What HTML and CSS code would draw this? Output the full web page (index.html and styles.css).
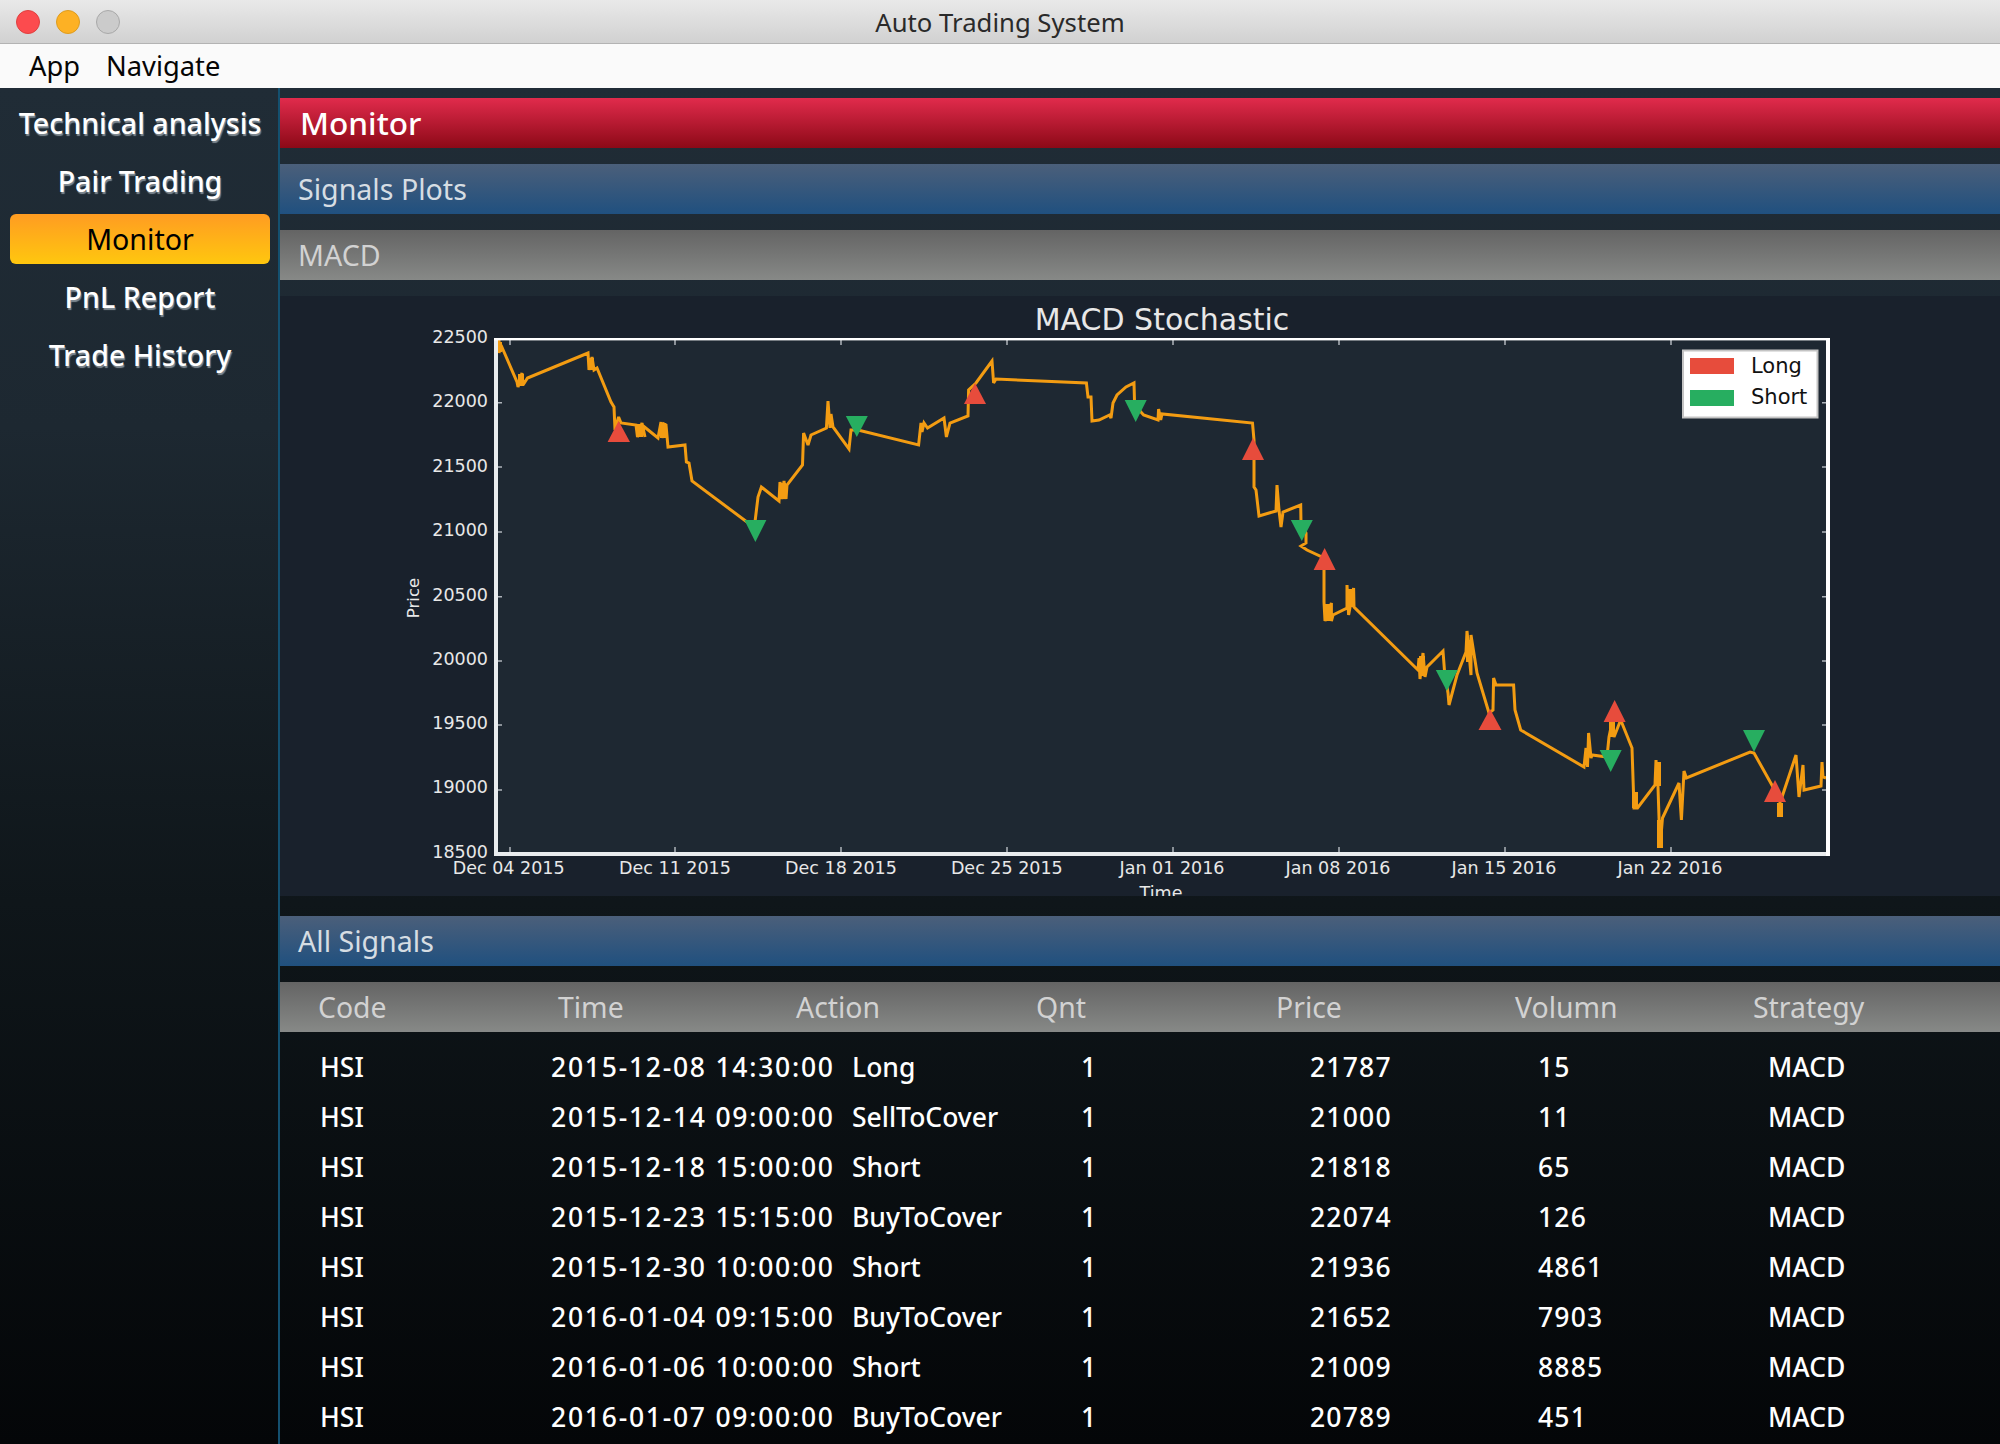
FILE: index.html
```html
<!DOCTYPE html>
<html lang="en">
<head>
<meta charset="utf-8">
<title>Auto Trading System</title>
<link rel="stylesheet" href="styles.css">
</head>
<body>
<div class="app">
  <header class="titlebar">
    <div class="lights"><span class="light red"></span><span class="light amber"></span><span class="light off"></span></div>
    <div class="title">Auto Trading System</div>
  </header>
  <nav class="menubar"><span>App</span><span>Navigate</span></nav>
  <div class="workspace">
    <aside class="sidebar">
      <div class="nav-item">Technical analysis</div>
      <div class="nav-item">Pair Trading</div>
      <div class="nav-item active">Monitor</div>
      <div class="nav-item">PnL Report</div>
      <div class="nav-item">Trade History</div>
    </aside>
    <main class="main">
      <div class="bar bar-red">Monitor</div>
      <div class="bar bar-blue">Signals Plots</div>
      <div class="bar bar-grey">MACD</div>
      <section class="chart-panel">
        <svg class="chart" viewBox="280 296 1720 600" width="1720" height="600" aria-label="MACD Stochastic chart">
          <rect class="plot-bg" x="494" y="338" width="1336" height="518"/>
          <g class="ticks">
            <path d="M502 402.7h-4M502 467h-4M502 532h-4M502 596.7h-4M502 661h-4M502 725h-4M502 790h-4"/>
            <path d="M1822 402.7h4M1822 467h4M1822 532h4M1822 596.7h4M1822 661h4M1822 725h4M1822 790h4"/>
            <path d="M510 340v5M675 340v5M841 340v5M1007 340v5M1173 340v5M1339 340v5M1505 340v5M1671 340v5"/>
            <path d="M510 852v-5M675 852v-5M841 852v-5M1007 852v-5M1173 852v-5M1339 852v-5M1505 852v-5M1671 852v-5"/>
          </g>
          <polyline class="price-line" points="499,340 499,353 501,345 517,382 518,387 522,373 523,385 527.5,378 588,353 589,370 592,357 594,370 597,368 611,402 614,407 615,430 618.6,417 621,423 636,425 637.5,437 642,423 645,437 642,425 658,438 661,422 662,438 664,424 666,425 668,447 685,445 686.4,462 689,463 692,481 747,522 755,522 758,497 761.4,487 779,501 780,482 782,499 784,481 786,499 787,485 802.5,465 803.6,433 808,445 811,435 826.4,428 828,401 830,428 831,414 833,427 849,449 851,430 858,430 918.6,445 921,423 922,432 924,423 927.5,428 944,418 946.4,437 950,423 968,416 968.6,390 976,383 992,361 993.6,383 996,379 1086.4,383 1088,397 1091,397 1092,421 1099,420 1109.6,415 1111,418 1113,403 1117,395 1126,387 1134,383 1134.6,405 1143.6,415 1158,420 1158.6,409 1160.7,420 1162,414 1252.5,423 1254,440 1254,487 1256,490 1259,516 1276,511 1277,485 1279,510 1281,527 1283,512 1300.7,505 1301,523 1306,533 1306,543 1301,546 1307,550 1324,558 1324,602 1325,621 1331.4,603 1331.4,621 1333,615 1347,608 1347,585 1348.6,615 1353.6,588 1354,607 1418,670 1419,658 1420,679 1423,653 1425,677 1427,667 1443,651 1444.6,672 1448,693 1449,705 1457,675 1466,652 1467,631 1471,675 1471,635 1477,673 1489,713 1493,710 1493.6,678 1496,685 1513.6,685 1515,710 1520.7,730 1584,767 1586,748 1587.5,767 1588.6,733 1591,758 1592,755 1607,757 1609,737 1612.5,720 1614,737 1620.7,720 1632,748 1634,808 1637.5,808 1655,785 1656,760 1658,787 1660,848 1662.5,818 1679,783 1681.4,820 1684,771 1686.4,778 1750,752 1754,753 1773,787 1780,800 1780,817 1780,800 1782,797 1796,755 1799,797 1803,765 1804,790 1821,786 1822,762 1823,777 1826,778"/>
          <path class="price-blobs" d="M499 342v10M521 374v12M591 358v12M640 424v13M663 423v15M783 483v16M1328 604v17M1351 589v18M1422 656v20M1469 640v22M1635 792v16M1658 762v24M1660 820v28M1780 803v14M1612 722v15"/>
          <g class="long">
            <polygon points="618.6,421 630,442 607.6,442"/>
            <polygon points="975,383 986,404 964,404"/>
            <polygon points="1253,438 1264,460 1242,460"/>
            <polygon points="1324.6,548 1335.6,570 1313.6,570"/>
            <polygon points="1490,709 1501.5,730 1478.5,730"/>
            <polygon points="1614.6,700 1625.6,722 1603.6,722"/>
            <polygon points="1775,780 1786,802 1764,802"/>
          </g>
          <g class="short">
            <polygon points="744.4,520 766.4,520 755.4,542"/>
            <polygon points="845.8,416 867.8,416 856.8,437"/>
            <polygon points="1124.7,400 1146.7,400 1135.7,422"/>
            <polygon points="1290.8,520 1312.8,520 1301.8,541"/>
            <polygon points="1435.8,670 1457.8,670 1446.8,691"/>
            <polygon points="1599.7,750 1621.7,750 1610.7,772"/>
            <polygon points="1743,730 1765,730 1754,752"/>
          </g>
          <g class="axes">
            <rect x="494" y="338" width="4" height="518"/>
            <rect x="494" y="852" width="1336" height="4"/>
            <rect class="axes-bright" x="494" y="338" width="1336" height="2.4"/>
            <rect class="axes-bright" x="1826" y="338" width="4" height="518"/>
          </g>
          <g class="y-labels">
            <text x="488" y="343">22500</text>
            <text x="488" y="407">22000</text>
            <text x="488" y="472">21500</text>
            <text x="488" y="536">21000</text>
            <text x="488" y="601">20500</text>
            <text x="488" y="665">20000</text>
            <text x="488" y="729">19500</text>
            <text x="488" y="793">19000</text>
            <text x="488" y="858">18500</text>
          </g>
          <g class="x-labels">
            <text x="508.7" y="874">Dec 04 2015</text>
            <text x="675" y="874">Dec 11 2015</text>
            <text x="841" y="874">Dec 18 2015</text>
            <text x="1006.8" y="874">Dec 25 2015</text>
            <text x="1172" y="874">Jan 01 2016</text>
            <text x="1338" y="874">Jan 08 2016</text>
            <text x="1504" y="874">Jan 15 2016</text>
            <text x="1670" y="874">Jan 22 2016</text>
            <text x="1161" y="899">Time</text>
          </g>
          <text class="price-label" transform="translate(419 598) rotate(-90)">Price</text>
          <text class="chart-title" x="1162" y="330">MACD Stochastic</text>
          <rect class="legend" x="1683" y="350.5" width="134.5" height="67"/>
          <rect class="swatch-long" x="1690" y="358" width="44" height="16"/>
          <rect class="swatch-short" x="1690" y="390" width="44" height="16"/>
          <text class="legend-text" x="1751" y="373">Long</text>
          <text class="legend-text" x="1751" y="404">Short</text>
        </svg>
      </section>
      <div class="bar bar-blue bar-signals">All Signals</div>
      <div class="table-head"><span>Code</span><span>Time</span><span>Action</span><span>Qnt</span><span>Price</span><span>Volumn</span><span>Strategy</span></div>
      <div class="table-body">
        <div class="row"><span>HSI</span><span class="stamp">2015-12-08 14:30:00</span><span>Long</span><span>1</span><span class="num">21787</span><span class="num">15</span><span>MACD</span></div>
        <div class="row"><span>HSI</span><span class="stamp">2015-12-14 09:00:00</span><span>SellToCover</span><span>1</span><span class="num">21000</span><span class="num">11</span><span>MACD</span></div>
        <div class="row"><span>HSI</span><span class="stamp">2015-12-18 15:00:00</span><span>Short</span><span>1</span><span class="num">21818</span><span class="num">65</span><span>MACD</span></div>
        <div class="row"><span>HSI</span><span class="stamp">2015-12-23 15:15:00</span><span>BuyToCover</span><span>1</span><span class="num">22074</span><span class="num">126</span><span>MACD</span></div>
        <div class="row"><span>HSI</span><span class="stamp">2015-12-30 10:00:00</span><span>Short</span><span>1</span><span class="num">21936</span><span class="num">4861</span><span>MACD</span></div>
        <div class="row"><span>HSI</span><span class="stamp">2016-01-04 09:15:00</span><span>BuyToCover</span><span>1</span><span class="num">21652</span><span class="num">7903</span><span>MACD</span></div>
        <div class="row"><span>HSI</span><span class="stamp">2016-01-06 10:00:00</span><span>Short</span><span>1</span><span class="num">21009</span><span class="num">8885</span><span>MACD</span></div>
        <div class="row"><span>HSI</span><span class="stamp">2016-01-07 09:00:00</span><span>BuyToCover</span><span>1</span><span class="num">20789</span><span class="num">451</span><span>MACD</span></div>
      </div>
    </main>
  </div>
</div>
</body>
</html>
```
FILE: styles.css
```css
* { box-sizing: border-box; }
html, body { margin: 0; height: 100%; }
body { overflow: hidden; background: #000; font-family: "Noto Sans", "DejaVu Sans", sans-serif; }
.app { width: 2000px; height: 1444px; display: flex; flex-direction: column; overflow: hidden; }

.titlebar { height: 44px; flex: none; position: relative; display: flex; align-items: center; justify-content: center; padding-top: 2px; background: linear-gradient(#e9e9e9, #d1d1d1); border-bottom: 1px solid #b3b3b3; }
.lights { position: absolute; left: 16px; top: 10px; display: flex; gap: 16px; }
.light { width: 24px; height: 24px; border-radius: 50%; border: 1px solid; }
.red { background: #fc4b4e; border-color: #e0403f; }
.amber { background: #fdb124; border-color: #de9c1e; }
.off { background: #cbcbcb; border-color: #a9a9a9; }
.title { font-size: 25.7px; color: #2a2a2a; line-height: 40px; }

.menubar { height: 44px; flex: none; background: #fafafa; display: flex; align-items: center; gap: 26px; padding: 0 0 2px 29px; font-size: 27.3px; color: #050505; }

.workspace { flex: 1; display: flex; min-height: 0; background: linear-gradient(#202c36 0, #1d2831 25%, #0f161a 60%, #040608 100%); }
.sidebar { width: 280px; flex: none; border-right: 2px solid #14506f; padding: 10px 8px 0 10px; display: flex; flex-direction: column; gap: 8px; }
.nav-item { height: 50px; line-height: 50px; border-radius: 6px; text-align: center; font-size: 28.6px; font-weight: 500; color: #fff; text-shadow: 1px 1.5px 1px #7f8a92; white-space: nowrap; }
.active { background: linear-gradient(#ff9c22, #ffc70e); color: #000; text-shadow: none; font-weight: 400; }

.main { flex: 1; min-width: 0; padding-top: 10px; display: flex; flex-direction: column; gap: 16px; }
.bar { height: 50px; flex: none; line-height: 50px; padding-left: 18px; font-size: 28.6px; white-space: nowrap; }
.bar-red { background: linear-gradient(#e12b4c, #8c0917); color: #fff; font-size: 31.6px; font-weight: 500; padding-left: 20px; }
.bar-blue { background: linear-gradient(#4b5f7a, #20507f); color: #d6dde3; }
.bar-grey { background: linear-gradient(#646464, #878987); color: #d2d2d2; }
.bar-signals { margin-top: 4px; }

.chart-panel { height: 600px; flex: none; background: #19212c; overflow: hidden; }
.chart { display: block; font-family: "DejaVu Sans", sans-serif; }
.plot-bg { fill: #1e2832; }
.ticks path { stroke: #aeb4ba; stroke-width: 1.5; fill: none; }
.price-line { fill: none; stroke: #f39c12; stroke-width: 3; stroke-linejoin: miter; stroke-miterlimit: 3; }
.price-blobs { fill: none; stroke: #f39c12; stroke-width: 6; }
.long polygon { fill: #e74c3c; }
.short polygon { fill: #27ae60; }
.axes rect { fill: #e9ecee; }
.axes .axes-bright { fill: #fff; }
.y-labels text { fill: #e8e8e8; font-size: 17.5px; text-anchor: end; }
.x-labels text { fill: #e8e8e8; font-size: 17.5px; text-anchor: middle; }
.price-label { fill: #e8e8e8; font-size: 16.5px; text-anchor: middle; }
.chart-title { fill: #e8e8e8; font-size: 30px; text-anchor: middle; }
.legend { fill: #fff; stroke: #c4c4c4; stroke-width: 2; }
.swatch-long { fill: #e74c3c; }
.swatch-short { fill: #27ae60; }
.legend-text { fill: #111; font-size: 21px; }

.table-head { height: 50px; flex: none; display: grid; grid-template-columns: 240px 238px 240px 240px 239px 238px auto; padding-left: 38px; align-items: center; background: linear-gradient(#646464, #878987); color: #d2d2d2; font-size: 28.4px; }
.table-body { margin-top: -6px; }
.row { height: 50px; display: grid; grid-template-columns: 231px 301px 229px 229px 228px 230px auto; padding-left: 40px; align-items: center; color: #fff; font-size: 26.5px; font-weight: 500; white-space: nowrap; }
.stamp { letter-spacing: 1.75px; }
.num { letter-spacing: 1.2px; }
```
